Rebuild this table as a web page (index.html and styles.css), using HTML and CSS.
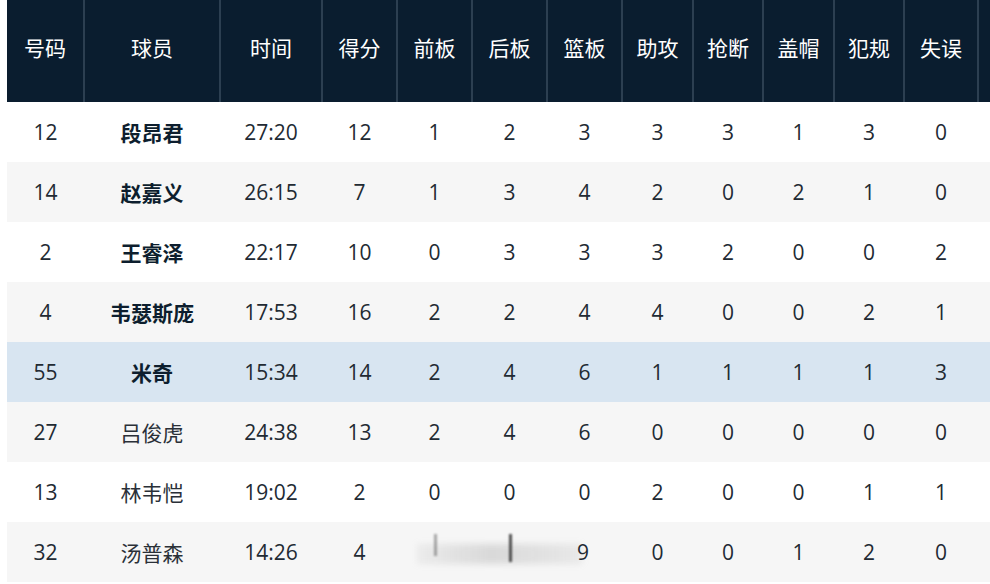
FILE: index.html
```html
<!DOCTYPE html>
<html lang="zh">
<head>
<meta charset="utf-8">
<link rel="stylesheet" href="styles.css">
</head>
<body>
<div class="frame">
<table class="stats">
  <colgroup>
    <col class="c-num"><col class="c-name"><col class="c-time"><col class="c-75"><col class="c-75"><col class="c-75"><col class="c-75"><col class="c-71"><col class="c-70"><col class="c-71"><col class="c-70"><col class="c-74"><col class="c-extra">
  </colgroup>
  <thead>
    <tr><th>号码</th><th>球员</th><th>时间</th><th>得分</th><th>前板</th><th>后板</th><th>篮板</th><th>助攻</th><th>抢断</th><th>盖帽</th><th>犯规</th><th>失误</th><th></th></tr>
  </thead>
  <tbody>
    <tr><td>12</td><td class="name starter">段昂君</td><td>27:20</td><td>12</td><td>1</td><td>2</td><td>3</td><td>3</td><td>3</td><td>1</td><td>3</td><td>0</td><td></td></tr>
    <tr class="alt"><td>14</td><td class="name starter">赵嘉义</td><td>26:15</td><td>7</td><td>1</td><td>3</td><td>4</td><td>2</td><td>0</td><td>2</td><td>1</td><td>0</td><td></td></tr>
    <tr><td>2</td><td class="name starter">王睿泽</td><td>22:17</td><td>10</td><td>0</td><td>3</td><td>3</td><td>3</td><td>2</td><td>0</td><td>0</td><td>2</td><td></td></tr>
    <tr class="alt"><td>4</td><td class="name starter">韦瑟斯庞</td><td>17:53</td><td>16</td><td>2</td><td>2</td><td>4</td><td>4</td><td>0</td><td>0</td><td>2</td><td>1</td><td></td></tr>
    <tr class="hl"><td>55</td><td class="name starter">米奇</td><td>15:34</td><td>14</td><td>2</td><td>4</td><td>6</td><td>1</td><td>1</td><td>1</td><td>1</td><td>3</td><td></td></tr>
    <tr class="alt"><td>27</td><td class="name">吕俊虎</td><td>24:38</td><td>13</td><td>2</td><td>4</td><td>6</td><td>0</td><td>0</td><td>0</td><td>0</td><td>0</td><td></td></tr>
    <tr><td>13</td><td class="name">林韦恺</td><td>19:02</td><td>2</td><td>0</td><td>0</td><td>0</td><td>2</td><td>0</td><td>0</td><td>1</td><td>1</td><td></td></tr>
    <tr class="alt"><td>32</td><td class="name">汤普森</td><td>14:26</td><td>4</td><td colspan="3" class="smudged"><div class="smudge-wrap"><span class="smudge"></span><span class="smudge-mark m1"></span><span class="smudge-mark m2"></span><span class="nine">9</span></div></td><td>0</td><td>0</td><td>1</td><td>2</td><td>0</td><td></td></tr>
  </tbody>
</table>
</div>
</body>
</html>
```
FILE: styles.css
```css
html, body {
  margin: 0;
  padding: 0;
  background: #ffffff;
  overflow: hidden;
}
.frame {
  width: 990px;
  height: 584px;
  overflow: hidden;
  font-family: "Open Sans", "Noto Sans CJK SC", sans-serif;
}
.stats {
  margin-left: 7px;
  border-collapse: collapse;
  table-layout: fixed;
  width: 1051px;
}
.c-num { width: 77px; }
.c-name { width: 136px; }
.c-time { width: 102px; }
.c-75 { width: 75px; }
.c-71 { width: 71px; }
.c-70 { width: 70px; }
.c-74 { width: 74px; }
.c-extra { width: 80px; }

.stats th {
  height: 102px;
  padding: 0 0 8px 0;
  background: #0a1d2f;
  color: #ffffff;
  font-family: "Noto Sans CJK SC", sans-serif;
  font-weight: 400;
  font-size: 21px;
  text-align: center;
  border-right: 2px solid #2c3f51;
  vertical-align: middle;
  box-sizing: border-box;
}
.stats td {
  height: 60px;
  padding: 0;
  text-align: center;
  vertical-align: middle;
  font-size: 21px;
  color: #222a33;
  box-sizing: border-box;
}
.stats tbody tr { background: #ffffff; }
.stats tbody tr.alt { background: #f6f6f6; }
.stats tbody tr.hl { background: #d8e5f1; }

.stats td.name {
  font-family: "Noto Sans CJK SC", sans-serif;
  color: #2a3038;
}
.stats td.name.starter {
  font-weight: 700;
  color: #0d1e2e;
}
.smudge-wrap {
  display: flex;
  align-items: center;
  justify-content: flex-end;
  height: 60px;
  padding-right: 33px;
  position: relative;
}
.smudge {
  position: absolute;
  left: 20px;
  top: 22px;
  width: 165px;
  height: 20px;
  background: linear-gradient(90deg, rgba(160,160,160,0.12), rgba(130,130,130,0.25) 45%, rgba(160,160,160,0.15));
  filter: blur(3px);
}
.smudge-mark {
  position: absolute;
  width: 3px;
  background: #333;
  filter: blur(1px);
}
.m1 { left: 37px; top: 12px; height: 22px; opacity: 0.4; }
.m2 { left: 112px; top: 12px; height: 28px; opacity: 0.85; }
.nine { position: relative; }
```
